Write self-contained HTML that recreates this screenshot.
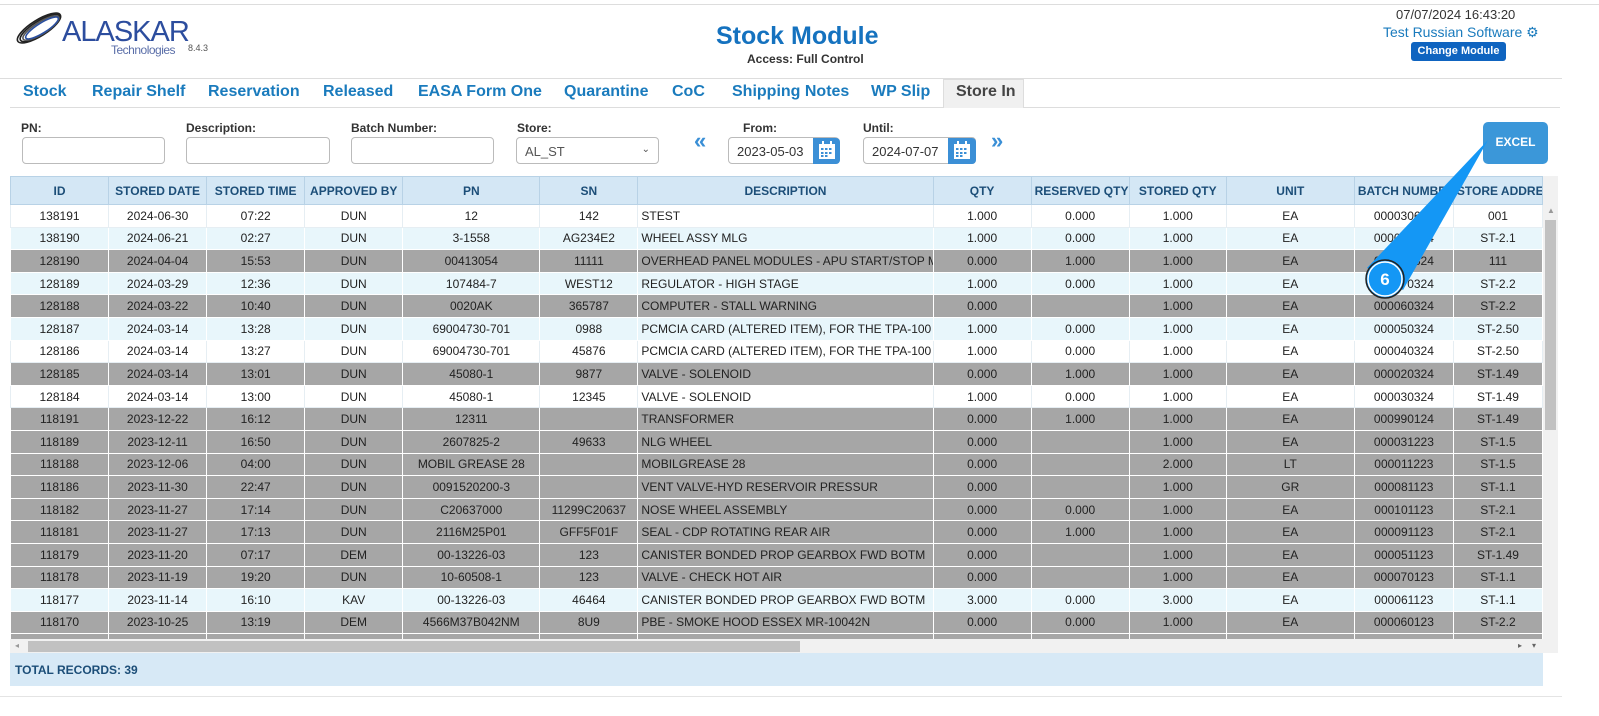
<!DOCTYPE html>
<html><head><meta charset="utf-8"><style>
*{box-sizing:border-box;margin:0;padding:0}
body{width:1599px;height:716px;background:#fff;font-family:"Liberation Sans",Arial,sans-serif;position:relative;overflow:hidden}
.a{position:absolute}
.tab{position:absolute;top:83px;font-size:16px;font-weight:bold;color:#1a7bbd}
.lbl{position:absolute;top:121px;font-size:12px;font-weight:bold;color:#333}
.inp{position:absolute;top:137px;height:27px;border:1px solid #bbb;border-radius:4px;background:#fff;font-size:13px;color:#333;padding:6px 8px}
table{border-collapse:collapse;table-layout:fixed;font-size:12px}
td,th{height:22.6px;text-align:center;white-space:nowrap;overflow:hidden;border:1px solid #fff;color:#222;padding:0 3px}
th{height:28px;background:#d4e7f5;color:#1c4e78;font-weight:bold;border:1px solid #b8d2e6}
td.d{text-align:left}
tr.w td{background:#fff;border-color:#e6eef3}
tr.b td{background:#e8f6fb;border-color:#fff}
tr.g td{background:#a6a6a6;border-color:#fff}
</style></head><body>
<div class="a" style="left:0;top:4px;width:1599px;border-top:1px solid #ddd"></div>
<svg class="a" style="left:12px;top:8px" width="60" height="40" viewBox="0 0 60 40">
<g fill="none" stroke="#222" stroke-width="1.6">
<ellipse cx="27" cy="20" rx="25" ry="8" transform="rotate(-32 27 20)"/>
<ellipse cx="28" cy="20" rx="23" ry="7" transform="rotate(-32 28 20)"/>
<ellipse cx="29" cy="20" rx="21" ry="6" transform="rotate(-32 29 20)" stroke="#555"/>
<ellipse cx="30" cy="20" rx="19" ry="5" transform="rotate(-32 30 20)" stroke="#2a4fa0"/>
</g></svg>
<div class="a" style="left:62px;top:16px;font-size:29px;color:#2c4d9e;letter-spacing:-1px">ALASKAR</div>
<div class="a" style="left:111px;top:43px;font-size:12px;color:#5a6ea8;letter-spacing:-0.5px">Technologies</div>
<div class="a" style="left:188px;top:43px;font-size:9px;color:#555">8.4.3</div>
<div class="a" style="left:716px;top:22px;font-size:25px;font-weight:bold;color:#1572bf">Stock Module</div>
<div class="a" style="left:747px;top:52px;font-size:12px;font-weight:bold;color:#333">Access: Full Control</div>
<div class="a" style="left:1396px;top:7px;font-size:13px;color:#333">07/07/2024 16:43:20</div>
<div class="a" style="left:1383px;top:24px;font-size:14px;color:#1a7bbd">Test Russian Software ⚙</div>
<div class="a" style="left:1411px;top:42px;width:95px;height:19px;background:#0f64c0;border-radius:3px;color:#fff;font-size:11px;font-weight:bold;text-align:center;line-height:19px">Change Module</div>
<div class="a" style="left:0;top:78px;width:1562px;border-top:1px solid #ddd"></div>
<div class="a" style="left:10px;top:107px;width:1550px;border-top:1px solid #ddd"></div>
<div class="tab" style="left:23px">Stock</div>
<div class="tab" style="left:92px">Repair Shelf</div>
<div class="tab" style="left:208px">Reservation</div>
<div class="tab" style="left:323px">Released</div>
<div class="tab" style="left:418px">EASA Form One</div>
<div class="tab" style="left:564px">Quarantine</div>
<div class="tab" style="left:672px">CoC</div>
<div class="tab" style="left:732px">Shipping Notes</div>
<div class="tab" style="left:871px">WP Slip</div>
<div class="a" style="left:943px;top:79px;width:81px;height:29px;background:#f0f0f0;border:1px solid #ddd;border-bottom:none"></div>
<div class="tab" style="left:956px;color:#444">Store In</div>
<div class="lbl" style="left:21px">PN:</div>
<div class="lbl" style="left:186px">Description:</div>
<div class="lbl" style="left:351px">Batch Number:</div>
<div class="lbl" style="left:517px">Store:</div>
<div class="lbl" style="left:743px">From:</div>
<div class="lbl" style="left:863px">Until:</div>
<div class="inp" style="left:22px;width:143px"></div>
<div class="inp" style="left:186px;width:144px"></div>
<div class="inp" style="left:351px;width:143px"></div>
<div class="inp" style="left:516px;width:143px;color:#555">AL_ST<span style="position:absolute;right:8px;font-size:10px">⌄</span></div>
<div class="a" style="left:694px;top:128px;font-size:22px;color:#3a8fd6;font-weight:bold">«</div>
<div class="a" style="left:991px;top:128px;font-size:22px;color:#3a8fd6;font-weight:bold">»</div>
<div class="inp" style="left:728px;width:112px;border-radius:4px 5px 5px 4px">2023-05-03</div>
<div class="a" style="left:813px;top:138px;width:27px;height:26px;background:#3b8fd6;border-radius:0 4px 4px 0"></div>
<div class="inp" style="left:863px;width:113px">2024-07-07</div>
<div class="a" style="left:948px;top:138px;width:28px;height:26px;background:#3b8fd6;border-radius:0 4px 4px 0"></div>
<svg class="a" style="left:818px;top:141px" width="18" height="20"><rect x="1" y="3" width="16" height="15" fill="#fff"/><g fill="#3b8fd6"><rect x="3" y="7" width="2.5" height="2"/><rect x="7" y="7" width="2.5" height="2"/><rect x="11" y="7" width="2.5" height="2"/><rect x="3" y="11" width="2.5" height="2"/><rect x="7" y="11" width="2.5" height="2"/><rect x="11" y="11" width="2.5" height="2"/><rect x="3" y="14" width="2.5" height="2"/><rect x="7" y="14" width="2.5" height="2"/></g><rect x="4" y="0" width="2" height="5" fill="#fff"/><rect x="12" y="0" width="2" height="5" fill="#fff"/></svg>
<svg class="a" style="left:953px;top:141px" width="18" height="20"><rect x="1" y="3" width="16" height="15" fill="#fff"/><g fill="#3b8fd6"><rect x="3" y="7" width="2.5" height="2"/><rect x="7" y="7" width="2.5" height="2"/><rect x="11" y="7" width="2.5" height="2"/><rect x="3" y="11" width="2.5" height="2"/><rect x="7" y="11" width="2.5" height="2"/><rect x="11" y="11" width="2.5" height="2"/><rect x="3" y="14" width="2.5" height="2"/><rect x="7" y="14" width="2.5" height="2"/></g><rect x="4" y="0" width="2" height="5" fill="#fff"/><rect x="12" y="0" width="2" height="5" fill="#fff"/></svg>
<div class="a" style="left:1483px;top:122px;width:65px;height:42px;background:#3b97d9;border-radius:5px;color:#fff;font-size:12px;font-weight:bold;text-align:center;line-height:40px">EXCEL</div>

<div class="a" style="left:10px;top:176px;width:1533px;height:464px;overflow:hidden;background:#a6a6a6">
<table style="width:1533px">
<colgroup><col style="width:98px"><col style="width:98px"><col style="width:98px"><col style="width:98px"><col style="width:137px"><col style="width:98px"><col style="width:295px"><col style="width:98px"><col style="width:98px"><col style="width:97px"><col style="width:128px"><col style="width:99px"><col style="width:89px"></colgroup>
<tr><th>ID</th><th>STORED DATE</th><th>STORED TIME</th><th>APPROVED BY</th><th>PN</th><th>SN</th><th>DESCRIPTION</th><th>QTY</th><th>RESERVED QTY</th><th>STORED QTY</th><th>UNIT</th><th>BATCH NUMBER</th><th>STORE ADDRESS</th></tr>
<tr class="w"><td>138191</td><td>2024-06-30</td><td>07:22</td><td>DUN</td><td>12</td><td>142</td><td class="d">STEST</td><td>1.000</td><td>0.000</td><td>1.000</td><td>EA</td><td>000030624</td><td>001</td></tr>
<tr class="b"><td>138190</td><td>2024-06-21</td><td>02:27</td><td>DUN</td><td>3-1558</td><td>AG234E2</td><td class="d">WHEEL ASSY MLG</td><td>1.000</td><td>0.000</td><td>1.000</td><td>EA</td><td>000020624</td><td>ST-2.1</td></tr>
<tr class="g"><td>128190</td><td>2024-04-04</td><td>15:53</td><td>DUN</td><td>00413054</td><td>11111</td><td class="d">OVERHEAD PANEL MODULES - APU START/STOP M</td><td>0.000</td><td>1.000</td><td>1.000</td><td>EA</td><td>000010324</td><td>111</td></tr>
<tr class="b"><td>128189</td><td>2024-03-29</td><td>12:36</td><td>DUN</td><td>107484-7</td><td>WEST12</td><td class="d">REGULATOR - HIGH STAGE</td><td>1.000</td><td>0.000</td><td>1.000</td><td>EA</td><td>000070324</td><td>ST-2.2</td></tr>
<tr class="g"><td>128188</td><td>2024-03-22</td><td>10:40</td><td>DUN</td><td>0020AK</td><td>365787</td><td class="d">COMPUTER - STALL WARNING</td><td>0.000</td><td></td><td>1.000</td><td>EA</td><td>000060324</td><td>ST-2.2</td></tr>
<tr class="b"><td>128187</td><td>2024-03-14</td><td>13:28</td><td>DUN</td><td>69004730-701</td><td>0988</td><td class="d">PCMCIA CARD (ALTERED ITEM), FOR THE TPA-100 A</td><td>1.000</td><td>0.000</td><td>1.000</td><td>EA</td><td>000050324</td><td>ST-2.50</td></tr>
<tr class="w"><td>128186</td><td>2024-03-14</td><td>13:27</td><td>DUN</td><td>69004730-701</td><td>45876</td><td class="d">PCMCIA CARD (ALTERED ITEM), FOR THE TPA-100 A</td><td>1.000</td><td>0.000</td><td>1.000</td><td>EA</td><td>000040324</td><td>ST-2.50</td></tr>
<tr class="g"><td>128185</td><td>2024-03-14</td><td>13:01</td><td>DUN</td><td>45080-1</td><td>9877</td><td class="d">VALVE - SOLENOID</td><td>0.000</td><td>1.000</td><td>1.000</td><td>EA</td><td>000020324</td><td>ST-1.49</td></tr>
<tr class="w"><td>128184</td><td>2024-03-14</td><td>13:00</td><td>DUN</td><td>45080-1</td><td>12345</td><td class="d">VALVE - SOLENOID</td><td>1.000</td><td>0.000</td><td>1.000</td><td>EA</td><td>000030324</td><td>ST-1.49</td></tr>
<tr class="g"><td>118191</td><td>2023-12-22</td><td>16:12</td><td>DUN</td><td>12311</td><td></td><td class="d">TRANSFORMER</td><td>0.000</td><td>1.000</td><td>1.000</td><td>EA</td><td>000990124</td><td>ST-1.49</td></tr>
<tr class="g"><td>118189</td><td>2023-12-11</td><td>16:50</td><td>DUN</td><td>2607825-2</td><td>49633</td><td class="d">NLG WHEEL</td><td>0.000</td><td></td><td>1.000</td><td>EA</td><td>000031223</td><td>ST-1.5</td></tr>
<tr class="g"><td>118188</td><td>2023-12-06</td><td>04:00</td><td>DUN</td><td>MOBIL GREASE 28</td><td></td><td class="d">MOBILGREASE 28</td><td>0.000</td><td></td><td>2.000</td><td>LT</td><td>000011223</td><td>ST-1.5</td></tr>
<tr class="g"><td>118186</td><td>2023-11-30</td><td>22:47</td><td>DUN</td><td>0091520200-3</td><td></td><td class="d">VENT VALVE-HYD RESERVOIR PRESSUR</td><td>0.000</td><td></td><td>1.000</td><td>GR</td><td>000081123</td><td>ST-1.1</td></tr>
<tr class="g"><td>118182</td><td>2023-11-27</td><td>17:14</td><td>DUN</td><td>C20637000</td><td>11299C20637</td><td class="d">NOSE WHEEL ASSEMBLY</td><td>0.000</td><td>0.000</td><td>1.000</td><td>EA</td><td>000101123</td><td>ST-2.1</td></tr>
<tr class="g"><td>118181</td><td>2023-11-27</td><td>17:13</td><td>DUN</td><td>2116M25P01</td><td>GFF5F01F</td><td class="d">SEAL - CDP ROTATING REAR AIR</td><td>0.000</td><td>1.000</td><td>1.000</td><td>EA</td><td>000091123</td><td>ST-2.1</td></tr>
<tr class="g"><td>118179</td><td>2023-11-20</td><td>07:17</td><td>DEM</td><td>00-13226-03</td><td>123</td><td class="d">CANISTER BONDED PROP GEARBOX FWD BOTM</td><td>0.000</td><td></td><td>1.000</td><td>EA</td><td>000051123</td><td>ST-1.49</td></tr>
<tr class="g"><td>118178</td><td>2023-11-19</td><td>19:20</td><td>DUN</td><td>10-60508-1</td><td>123</td><td class="d">VALVE - CHECK HOT AIR</td><td>0.000</td><td></td><td>1.000</td><td>EA</td><td>000070123</td><td>ST-1.1</td></tr>
<tr class="b"><td>118177</td><td>2023-11-14</td><td>16:10</td><td>KAV</td><td>00-13226-03</td><td>46464</td><td class="d">CANISTER BONDED PROP GEARBOX FWD BOTM</td><td>3.000</td><td>0.000</td><td>3.000</td><td>EA</td><td>000061123</td><td>ST-1.1</td></tr>
<tr class="g"><td>118170</td><td>2023-10-25</td><td>13:19</td><td>DEM</td><td>4566M37B042NM</td><td>8U9</td><td class="d">PBE - SMOKE HOOD ESSEX MR-10042N</td><td>0.000</td><td>0.000</td><td>1.000</td><td>EA</td><td>000060123</td><td>ST-2.2</td></tr>
<tr class="g"><td></td><td></td><td></td><td></td><td></td><td></td><td></td><td></td><td></td><td></td><td></td><td></td><td></td></tr>
</table></div>
<div class="a" style="left:1543px;top:176px;width:15px;height:464px;background:#f1f1f1"></div>
<div class="a" style="left:1545px;top:220px;width:11px;height:210px;background:#c1c1c1"></div>
<div class="a" style="left:1547px;top:206px;font-size:8px;color:#999">▲</div>
<div class="a" style="left:10px;top:639px;width:1548px;height:14px;background:#f1f1f1"></div>
<div class="a" style="left:28px;top:641px;width:772px;height:11px;background:#c1c1c1"></div>
<div class="a" style="left:15px;top:641px;font-size:8px;color:#999">◂</div>
<div class="a" style="left:1518px;top:641px;font-size:8px;color:#666">▸</div>
<div class="a" style="left:1532px;top:641px;font-size:8px;color:#666">▾</div>
<div class="a" style="left:10px;top:653px;width:1533px;height:33px;background:#d7e9f6"></div>
<div class="a" style="left:15px;top:663px;font-size:12px;font-weight:bold;color:#1c4e78">TOTAL RECORDS: 39</div>
<div class="a" style="left:0;top:696px;width:1562px;border-top:1px solid #e4e4e4"></div>
<svg class="a" style="left:0;top:0" width="1599" height="716">
<polygon points="1488,140 1367,268 1403,290" fill="#1497f5"/>
<circle cx="1385" cy="279" r="19" fill="#1497f5" stroke="#222" stroke-width="1.5"/>
<circle cx="1385" cy="279" r="17" fill="none" stroke="#fff" stroke-width="1.5"/>
<text x="1385" y="285" text-anchor="middle" font-family="Liberation Sans" font-weight="bold" font-size="17" fill="#fff">6</text>
</svg>
</body></html>
